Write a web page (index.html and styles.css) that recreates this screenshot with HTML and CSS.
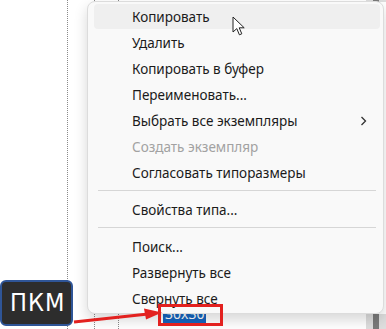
FILE: index.html
```html
<!DOCTYPE html>
<html lang="ru">
<head>
    <meta charset="UTF-8">
    <meta name="viewport" content="width=device-width, initial-scale=1.0">
    <title>Контекстное меню</title>
    <link rel="stylesheet" href="styles.css">
</head>
<body>
    <div class="canvas">
        <div class="guide guide1"></div>
        <div class="guide guide2"></div>
        <div class="guide guide3"></div>
        <div class="scroll scrollTop"></div>
        <div class="scroll scrollBottom"></div>

        <span class="sizeLabel">30x30</span>

        <ul class="menu">
            <li class="item hover">Копировать</li>
            <li class="item">Удалить</li>
            <li class="item">Копировать в буфер</li>
            <li class="item">Переименовать...</li>
            <li class="item sub">Выбрать все экземпляры
                <svg class="chevron" width="7" height="10" viewBox="0 0 7 10"><polyline points="1.5,1 5.5,5 1.5,9" fill="none" stroke="#333" stroke-width="1.3"/></svg>
            </li>
            <li class="item disabled">Создать экземпляр</li>
            <li class="item">Согласовать типоразмеры</li>
            <li class="sep"></li>
            <li class="item">Свойства типа...</li>
            <li class="sep"></li>
            <li class="item">Поиск...</li>
            <li class="item">Развернуть все</li>
            <li class="item">Свернуть все</li>
        </ul>

        <!-- mouse pointer -->
        <svg class="pointer" width="15" height="21" viewBox="0 0 15 21">
            <path d="M1 1 L1 16 L4.8 12.6 L7.4 18.8 L9.8 17.8 L7.2 11.8 L12.2 11.8 Z" fill="#fff" stroke="#222" stroke-width="1" stroke-linejoin="round"/>
        </svg>

        <div class="highlight"></div>
        <svg class="arrow" width="100" height="20" viewBox="0 0 100 20">
            <line x1="2" y1="14" x2="76" y2="6" stroke="#e3211f" stroke-width="3"/>
            <polygon points="90,4.5 72,0.5 74,11.5" fill="#e3211f"/>
        </svg>

        <div class="badge">ПКМ</div>
    </div>
</body>
</html>
```

FILE: styles.css
```css
* {
    box-sizing: border-box;
}
body {
    margin: 0;
    background: #fff;
    font-family: "Noto Sans", sans-serif;
    overflow: hidden;
}
.canvas {
    position: relative;
    width: 386px;
    height: 329px;
}
.guide {
    position: absolute;
    top: 0;
    bottom: 0;
    border-left: 1px dotted #8a8a8a;
}
.guide1 { left: 67px; }
.guide2 { left: 94px; }
.guide3 { left: 118px; }
.scroll {
    position: absolute;
    left: 366px;
    width: 20px;
    background: #dedede;
}
.scroll::after {
    content: '';
    position: absolute;
    left: 7px;
    top: 0;
    bottom: 0;
    width: 6px;
    background: #7a7a7a;
}
.scrollTop { top: 0; height: 2px; }
.scrollBottom { top: 314px; bottom: 0; }

.sizeLabel {
    position: absolute;
    left: 163px;
    top: 305px;
    padding: 0 2px;
    background: #1565c0;
    color: #fff;
    font-size: 14px;
    line-height: 18px;
}

.menu {
    position: absolute;
    left: 87px;
    top: 1px;
    width: 297px;
    height: 313px;
    margin: 0;
    padding: 2px 3px 0 6px;
    list-style: none;
    background: #f9f9f9;
    border: 1px solid #dcdcdc;
    border-radius: 8px;
    box-shadow: 0 6px 14px rgba(0, 0, 0, 0.16);
}
.item {
    position: relative;
    height: 26px;
    line-height: 26px;
    padding-left: 38px;
    font-size: 13.5px;
    color: #1b1b1b;
    border-radius: 4px;
    white-space: nowrap;
}
.hover {
    height: 25px;
    margin-bottom: 1px;
    background: #efefef;
}
.disabled {
    color: #a2a2a2;
}
.chevron {
    position: absolute;
    right: 13px;
    top: 8px;
}
.sep {
    height: 11px;
    margin: 0 4px;
    padding-top: 4px;
}
.sep::before {
    content: '';
    display: block;
    height: 1px;
    background: #d6d6d6;
}

.pointer {
    position: absolute;
    left: 232px;
    top: 16px;
}
.highlight {
    position: absolute;
    left: 158px;
    top: 304px;
    width: 65px;
    height: 22px;
    border: 3px solid #e3211f;
}
.arrow {
    position: absolute;
    left: 72px;
    top: 308px;
}
.badge {
    position: absolute;
    left: 0;
    top: 280px;
    width: 73px;
    height: 46px;
    background: #2d2d2d;
    border: 2px solid #2f5597;
    border-radius: 6px;
    color: #fff;
    font-family: "DejaVu Sans Condensed", "DejaVu Sans", sans-serif;
    font-stretch: condensed;
    font-size: 25px;
    letter-spacing: 1px;
    line-height: 42px;
    padding-left: 8px;
}
```
